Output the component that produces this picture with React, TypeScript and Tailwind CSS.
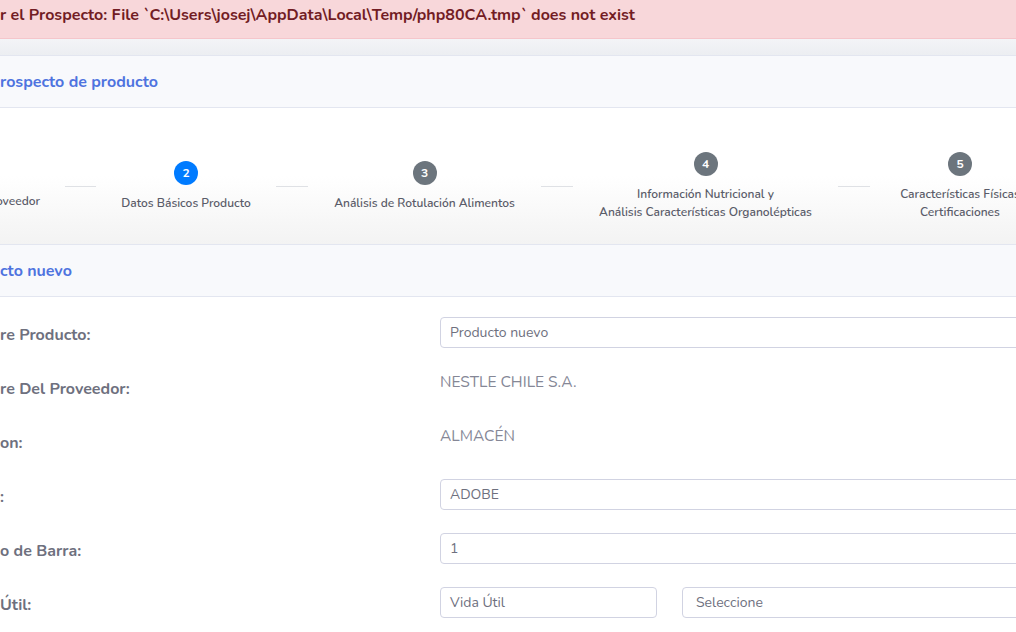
import React from 'react'

const font = { fontFamily: 'Nunito, Lato, "Open Sans", sans-serif' }

interface StepProps {
  num: string
  active?: boolean
  lines: string[]
  width: string
}

const Step: React.FC<StepProps> = ({ num, active, lines, width }) => (
  <div className={`${width} shrink-0 flex flex-col items-center`}>
    <div
      className={`w-6 h-6 rounded-full flex items-center justify-center text-white text-xs font-bold ${
        active ? 'bg-[#007bff]' : 'bg-[#6c757d]'
      }`}
    >
      {num}
    </div>
    <div className="mt-[9px] text-[12px] leading-[18px] font-semibold text-[#5a5c69] text-center whitespace-nowrap">
      {lines.map((l) => (
        <div key={l}>{l}</div>
      ))}
    </div>
  </div>
)

const Line: React.FC<{ width: string }> = ({ width }) => (
  <div className={`${width} shrink-0 h-px bg-[#dfe1e5]`} />
)

const Input: React.FC<{ value: string; className?: string }> = ({ value, className }) => (
  <div
    className={`h-[31px] border border-[#d1d3e2] rounded-[4px] bg-white flex items-center px-[9px] text-[14px] text-[#6e707e] ${
      className ?? ''
    }`}
  >
    {value}
  </div>
)

const Row: React.FC<{ label: string; children: React.ReactNode }> = ({ label, children }) => (
  <div className="h-[54px] flex items-start">
    <div className="w-[440px] shrink-0 pt-[7px] text-[16px] leading-[22px] font-bold text-[#6e707e]">
      {label}
    </div>
    <div className="flex-1 min-w-0">{children}</div>
  </div>
)

export default function App() {
  return (
    <div className="w-[1016px] h-[632px] overflow-hidden bg-white" style={font}>
      <div className="h-[39px] bg-[#f8d7da] border-b border-[#f5c6cb] flex items-center text-[16px] font-bold text-[#721c24] whitespace-nowrap pb-[9px]">
        r el Prospecto: File `C:\Users\josej\AppData\Local\Temp/php80CA.tmp` does not exist
      </div>
      <div className="h-[16px] bg-gradient-to-b from-[#f3f4f7] to-[#eceef2]" />
      <div className="h-[53px] bg-[#f8f9fc] border-y border-[#e3e6f0] flex items-center text-[16px] font-bold text-[#4e73df]">
        rospecto de producto
      </div>
      <div className="h-[136px] bg-gradient-to-b from-white via-white to-[#f3f3f3] flex items-center pt-[20px]">
        <div className="w-[65px] shrink-0 flex flex-col items-end pr-[25px] pt-[30px]">
          <div className="text-[12px] leading-[18px] font-semibold text-[#5a5c69] whitespace-nowrap">oveedor</div>
        </div>
        <Line width="w-[31px]" />
        <Step num="2" active lines={['Datos Básicos Producto']} width="w-[180px]" />
        <Line width="w-[32px]" />
        <Step num="3" lines={['Análisis de Rotulación Alimentos']} width="w-[233px]" />
        <Line width="w-[32px]" />
        <Step
          num="4"
          lines={['Información Nutricional y', 'Análisis Características Organolépticas']}
          width="w-[265px]"
        />
        <Line width="w-[32px]" />
        <Step num="5" lines={['Características Físicas', 'Certificaciones']} width="w-[180px]" />
      </div>
      <div className="h-[53px] bg-[#f8f9fc] border-y border-[#e3e6f0] flex items-center text-[16px] font-bold text-[#4e73df]">
        cto nuevo
      </div>
      <div className="pt-[20px] w-[1100px]">
        <Row label="re Producto:">
          <Input value="Producto nuevo" />
        </Row>
        <Row label="re Del Proveedor:">
          <div className="text-[15.5px] leading-[22px] text-[#858796]">NESTLE CHILE S.A.</div>
        </Row>
        <Row label="on:">
          <div className="text-[15.5px] leading-[22px] text-[#858796]">ALMACÉN</div>
        </Row>
        <Row label=":">
          <Input value="ADOBE" />
        </Row>
        <Row label="o de Barra:">
          <Input value="1" />
        </Row>
        <Row label="Útil:">
          <div className="flex gap-[25px]">
            <Input value="Vida Útil" className="w-[217px] shrink-0" />
            <Input value="Seleccione" className="flex-1 px-[13px]" />
          </div>
        </Row>
      </div>
    </div>
  )
}
